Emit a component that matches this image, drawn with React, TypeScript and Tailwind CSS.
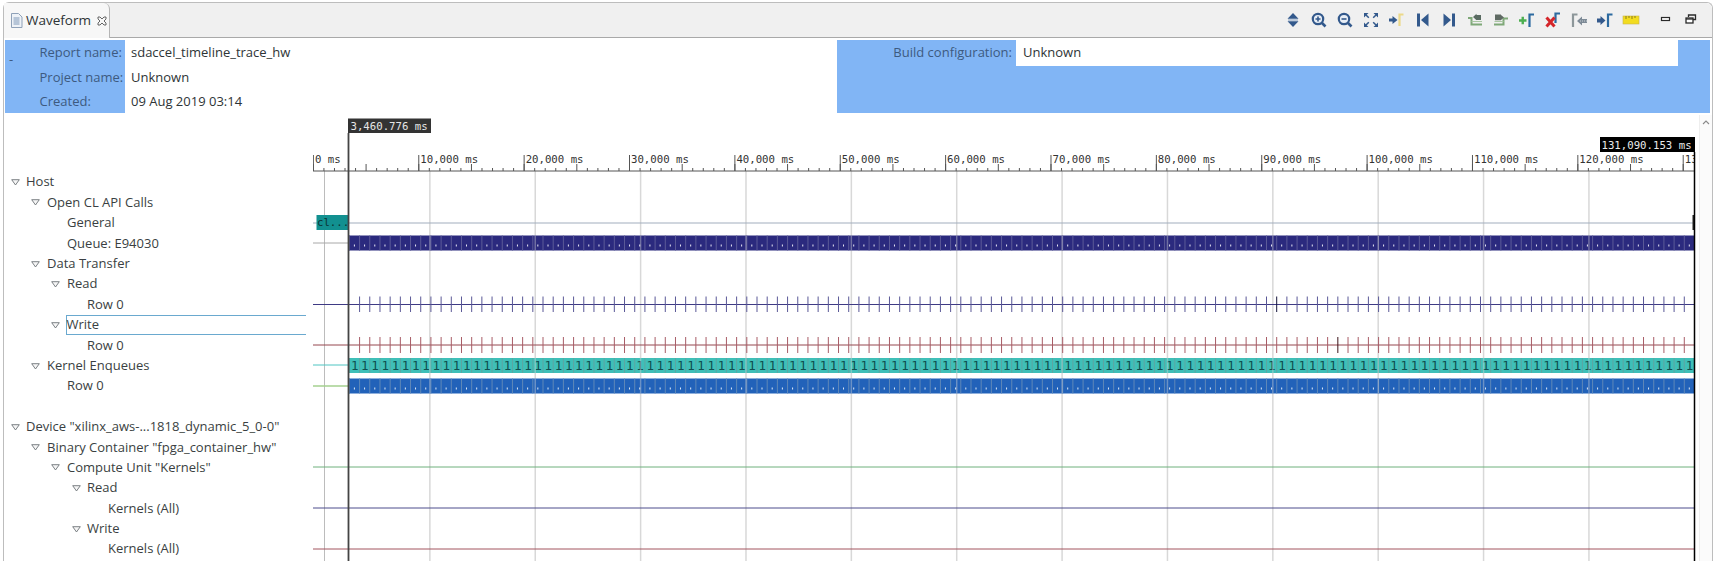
import React from "react";

const NAVY = "#33598c";

type TreeRow = { label: string; level: number; open?: boolean; selected?: boolean };

const treeRows: TreeRow[] = [
  { label: "Host", level: 0, open: true },
  { label: "Open CL API Calls", level: 1, open: true },
  { label: "General", level: 2 },
  { label: "Queue: E94030", level: 2 },
  { label: "Data Transfer", level: 1, open: true },
  { label: "Read", level: 2, open: true },
  { label: "Row 0", level: 3 },
  { label: "Write", level: 2, open: true, selected: true },
  { label: "Row 0", level: 3 },
  { label: "Kernel Enqueues", level: 1, open: true },
  { label: "Row 0", level: 2 },
  { label: "", level: 0 },
  { label: 'Device "xilinx_aws-...1818_dynamic_5_0-0"', level: 0, open: true },
  { label: 'Binary Container "fpga_container_hw"', level: 1, open: true },
  { label: 'Compute Unit "Kernels"', level: 2, open: true },
  { label: "Read", level: 3, open: true },
  { label: "Kernels (All)", level: 4 },
  { label: "Write", level: 3, open: true },
  { label: "Kernels (All)", level: 4 },
];

const indent = ["pl-[26px]", "pl-[47px]", "pl-[67px]", "pl-[87px]", "pl-[108px]"];
const arrowLeft = ["left-[11px]", "left-[31px]", "left-[51px]", "left-[72px]", "left-[92px]"];

function Icon({ children, w = 26 }: { children: React.ReactNode; w?: number }) {
  return (
    <svg width={w} height={18} viewBox={`0 0 ${w} 18`} className="shrink-0">
      <g transform={`translate(${(w - 16) / 2} 1)`}>{children}</g>
    </svg>
  );
}

function ToolbarIcons() {
  return (
    <div className="ml-auto mr-[15px] flex items-center">
      {/* expand / collapse */}
      <Icon>
        <path d="M8 1 13.500 6.800H2.500Z M8 15 2.500 9.200H13.500Z" fill={NAVY} />
        <path d="M3 8h10" stroke="#8aa4c6" />
      </Icon>
      {/* zoom in */}
      <Icon>
        <circle cx="7" cy="7" r="5.2" fill="#e8eef6" stroke={NAVY} strokeWidth="2.200" />
        <path d="M4.500 7h5M7 4.500v5" stroke={NAVY} strokeWidth="1.600" />
        <path d="M11 11l3.500 3.500" stroke={NAVY} strokeWidth="2.600" />
      </Icon>
      {/* zoom out */}
      <Icon>
        <circle cx="7" cy="7" r="5.2" fill="#e8eef6" stroke={NAVY} strokeWidth="2.200" />
        <path d="M4.500 7h5" stroke={NAVY} strokeWidth="1.600" />
        <path d="M11 11l3.500 3.500" stroke={NAVY} strokeWidth="2.600" />
      </Icon>
      {/* fit */}
      <Icon>
        <path d="M1 1h4.500L1 5.500Z M15 1h-4.500L15 5.500Z M1 15h4.500L1 10.500Z M15 15h-4.500L15 10.500Z" fill={NAVY} />
        <path d="M3 3l2.800 2.800M13 3l-2.800 2.800M3 13l2.800-2.800M13 13l-2.800-2.800" stroke={NAVY} strokeWidth="1.500" />
      </Icon>
      {/* go to cursor */}
      <Icon>
        <path d="M0 6.500h3.500V4L8.500 8l-5 4V9.500H0Z" fill={NAVY} />
        <path d="M10.500 14V2.500h4" fill="none" stroke="#ecd98a" strokeWidth="2.200" />
      </Icon>
      {/* first */}
      <Icon>
        <path d="M3.500 1.500v13" stroke={NAVY} strokeWidth="3" />
        <path d="M13.500 1.500 6 8l7.500 6.500Z" fill={NAVY} />
      </Icon>
      {/* last */}
      <Icon>
        <path d="M12.500 1.500v13" stroke={NAVY} strokeWidth="3" />
        <path d="M2.500 1.500 10 8l-7.500 6.500Z" fill={NAVY} />
      </Icon>
      {/* previous transition */}
      <Icon>
        <path d="M1 6h3.500V12.500H15" fill="none" stroke="#7fa878" strokeWidth="2" />
        <path d="M4.500 9.500H15" stroke="#a9c6a2" strokeWidth="1" />
        <path d="M6 5l3.500-3.200V3H14V8H9.500v.2Z" fill="#5a6b62" />
      </Icon>
      {/* next transition */}
      <Icon>
        <path d="M1 12.500h9.500V6.500H15" fill="none" stroke="#7fa878" strokeWidth="2" />
        <path d="M1.500 9.500h9" stroke="#a9c6a2" strokeWidth="1" />
        <path d="M2 2.500h6v.5l3 2.500L8 8v.2H2Z" fill="#5f6a63" />
      </Icon>
      {/* add marker */}
      <Icon>
        <path d="M0 8.500h7.500M3.750 4.750v7.500" stroke="#4caf50" strokeWidth="2.400" />
        <path d="M10.500 15V2.500h4.500" fill="none" stroke="#2c6aa0" strokeWidth="2.200" />
      </Icon>
      {/* delete marker */}
      <Icon>
        <path d="M10.500 11V1.500h4.500" fill="none" stroke="#2c6aa0" strokeWidth="2.200" />
        <path d="M1.500 5.500l8 9M9.500 5.500l-8 9" stroke="#d4252a" strokeWidth="3" />
      </Icon>
      {/* previous marker */}
      <Icon>
        <path d="M2 15V2.500h4.500" fill="none" stroke="#8d979a" strokeWidth="2.200" />
        <path d="M16 7H11V4.500L6 9l5 4.500V11h5Z" fill="#7d8a96" />
        <path d="M9 9h7" stroke="#c9d0d6" strokeDasharray="1 1" />
      </Icon>
      {/* next marker */}
      <Icon>
        <path d="M0 6.500h3.500V4L8.500 8.500l-5 4.500V10.500H0Z" fill={NAVY} />
        <path d="M11 15V2.500h4.500" fill="none" stroke="#2c6aa0" strokeWidth="2.200" />
      </Icon>
      {/* ruler */}
      <Icon>
        <rect x="0" y="4" width="16" height="8" fill="#f2dc1f" stroke="#c9b64d" strokeWidth="0.600" />
        <path d="M3 4v3M6 4v2M9 4v3M12 4v2" stroke="#8b7d1a" />
      </Icon>
      {/* minimize */}
      <div className="w-[17px]" />
      <svg width="14" height="10" viewBox="0 0 14 10" className="shrink-0 -ml-[2px]">
        <rect x="2.500" y="2.500" width="8" height="3" fill="#fff" stroke="#2a2a2a" strokeWidth="1.200" />
      </svg>
      {/* restore */}
      <svg width="12" height="12" viewBox="0 0 12 12" className="ml-[12px] shrink-0">
        <path d="M3.500 3V1h7v4.500H8" fill="none" stroke="#2a2a2a" strokeWidth="1.300" />
        <rect x="1" y="4" width="7" height="5" fill="#fff" stroke="#2a2a2a" strokeWidth="1.300" />
        <path d="M1 5h7" stroke="#2a2a2a" strokeWidth="1.300" />
      </svg>
    </div>
  );
}

function WaveChart() {
  const W = 105.37;
  const majors = Array.from({ length: 14 }, (_, i) => 313.4 + i * W);
  const minors = Array.from({ length: 131 }, (_, i) => 313.4 + i * (W / 10));
  const grid = Array.from({ length: 13 }, (_, i) => 324.5 + i * W);
  const cells = Array.from({ length: 132 }, (_, i) => 349.4 + i * 10.19);
  const mono = { fontFamily: '"DejaVu Sans Mono", monospace', fontSize: 10.7 };
  const one = { fontFamily: '"DejaVu Sans Mono", monospace', fontSize: 12.5 };

  return (
    <svg width={1386} height={446} viewBox="313 115 1386 446" className="block shrink-0">
      {/* grid */}
      {grid.map((x, i) =>
        x < 1694 ? (
          <line key={i} x1={x} x2={x} y1={171} y2={561} stroke={i === 0 ? "#bcbcbc" : "#d8d8d8"} strokeWidth={i === 0 ? 1 : 1.5} />
        ) : null
      )}

      {/* axis */}
      <line x1={313} x2={1694} y1={171} y2={171} stroke="#555" />
      {majors.map((x, i) => (
        <g key={i}>
          <line x1={x} x2={x} y1={155} y2={171} stroke="#555" />
          <text x={x + 1.5} y={162.5} fill="#333" style={mono}>
            {i === 0 ? "0 ms" : i === 13 ? "13" : `${(i * 10).toString()},000 ms`}
          </text>
        </g>
      ))}
      {minors.map((x, i) => (
        <line key={i} x1={x} x2={x} y1={i % 5 === 0 ? 164 : 168} y2={171} stroke="#555" />
      ))}
      <rect x={1695} y={153} width={4} height={16} fill="#fff" />

      {/* track lines */}
      <line x1={313} x2={1694} y1={223} y2={223} stroke="#a2adbd" strokeWidth={1.2} />
      <line x1={313} x2={349} y1={243} y2={243} stroke="#a8a8a8" />
      <line x1={313} x2={1694} y1={304.5} y2={304.5} stroke="#3e3a84" />
      <line x1={313} x2={1694} y1={345} y2={345} stroke="#95474f" />
      <line x1={313} x2={349} y1={365} y2={365} stroke="#4fc5c2" />
      <line x1={313} x2={349} y1={386} y2={386} stroke="#a5d08f" strokeWidth={1.3} />
      <line x1={313} x2={1694} y1={467} y2={467} stroke="#6fb07d" />
      <line x1={313} x2={1694} y1={508} y2={508} stroke="#4c4c8c" />
      <line x1={313} x2={1694} y1={549} y2={549} stroke="#a2545e" />

      {/* general */}
      <rect x={316.5} y={215} width={32} height={15} fill="#129090" />
      <text x={317} y={226} fill="#0a3434" style={mono}>
        cl...
      </text>
      <rect x={1692.5} y={215} width={2} height={15} fill="#222" />

      {/* queue */}
      <rect x={349} y={235.5} width={1345} height={15} fill="#2b2a7e" />
      {cells.map((x, i) => (
        <g key={i}>
          <line x1={x} x2={x} y1={235.5} y2={250.5} stroke="#5c5b98" />
          <rect x={x + 4.5} y={244.5} width={1} height={2} fill="#e8e8f4" />
        </g>
      ))}

      {/* read / write transactions */}
      {cells.slice(1).map((x, i) => (
        <g key={i}>
          <line x1={x} x2={x} y1={296.5} y2={312} stroke={i === 90 ? "#14143c" : "#5a5897"} />
          <line x1={x} x2={x} y1={337} y2={353} stroke={i === 96 ? "#3c1218" : "#a85c66"} />
        </g>
      ))}

      {/* kernel enqueues */}
      <rect x={349} y={358} width={1345} height={15} fill="#3fbfb8" />
      {cells.map((x, i) => (
        <g key={i}>
          <line x1={x} x2={x} y1={358} y2={373} stroke="#5da6a2" />
          <text x={x + 1.5} y={369.5} fill="#0f4f4f" style={one}>
            1
          </text>
        </g>
      ))}

      {/* row 0 */}
      <rect x={349} y={378.5} width={1345} height={15} fill="#2262b9" />
      {cells.map((x, i) => (
        <g key={i}>
          <line x1={x} x2={x} y1={378.5} y2={393.5} stroke="#5f88b8" />
          <rect x={x + 4.5} y={387.5} width={1} height={2} fill="#dfeaf8" />
        </g>
      ))}

      {/* grid shows faintly over bars */}
      {grid.slice(1).map((x, i) =>
        x < 1694 ? (
          <g key={i} opacity={0.4}>
            <line x1={x} x2={x} y1={235.5} y2={250.5} stroke="#d8d8d8" strokeWidth={1.5} />
            <line x1={x} x2={x} y1={358} y2={373} stroke="#d8d8d8" strokeWidth={1.5} />
            <line x1={x} x2={x} y1={378.5} y2={393.5} stroke="#d8d8d8" strokeWidth={1.5} />
          </g>
        ) : null
      )}

      {/* cursors */}
      <line x1={348.5} x2={348.5} y1={133} y2={561} stroke="#444" strokeWidth={1.8} />
      <line x1={1694.5} x2={1694.5} y1={152} y2={561} stroke="#000" strokeWidth={1.5} />
      <rect x={348} y={118.5} width={83} height={14.5} fill="#333" />
      <text x={350.5} y={130} fill="#e6e6e6" style={mono}>
        3,460.776 ms
      </text>
      <rect x={1600} y={137} width={95} height={15} fill="#000" />
      <text x={1601.5} y={148.5} fill="#eaeaea" style={mono}>
        131,090.153 ms
      </text>
    </svg>
  );
}

export default function App() {
  return (
    <div className="relative h-[561px] w-[1716px] overflow-hidden bg-white text-[13px] text-[#2e3436] [font-family:'Open_Sans',sans-serif]">
      <div className="mx-[3px] mt-[2px] flex h-[559px] flex-col rounded-t-[6px] border-x border-t border-[#bdbdbd]">
        {/* tab bar */}
        <div className="flex h-[35px] shrink-0 items-stretch rounded-t-[6px] border-b border-[#a9a9a9] bg-[#f0f0f0]">
          <div className="-mb-px flex w-[106px] items-center rounded-tr-[6px] border-r border-[#b5b5b5] bg-[#f7f7f7] pl-[6px]">
            <svg width="13" height="15" viewBox="0 0 13 15" className="shrink-0">
              <path d="M1.500.5h7l3.500 3.500v10.500h-10.500Z" fill="#eef2f7" stroke="#8fa1b8" />
              <path d="M3.500 5h6M3.500 7h6M3.500 9h6M3.500 11h6" stroke="#7f98b8" />
            </svg>
            <span className="ml-[3px] text-[13.5px] text-[#2e3436]">Waveform</span>
            <svg width="10" height="10" viewBox="0 0 10 10" className="ml-[6px] shrink-0">
              <path d="M1 1h2l2 2 2-2h2v2L7 5l2 2v2H7L5 7 3 9H1V7l2-2-2-2Z" fill="none" stroke="#555" strokeWidth="0.900" />
            </svg>
          </div>
          <ToolbarIcons />
        </div>

        {/* report header */}
        <div className="mt-[2px] flex h-[73px] shrink-0 pl-px pr-px">
          <div className="relative flex w-[120px] shrink-0 flex-col bg-[#81b5f5] pl-[34.5px] text-[#3d5a80]">
            <span className="absolute left-[4px] top-[10px] text-[#3d5a80]">-</span>
            <div className="flex h-[25px] items-center">Report name:</div>
            <div className="flex h-[25px] items-center">Project name:</div>
            <div className="flex h-[23px] items-center">Created:</div>
          </div>
          <div className="flex w-[712px] shrink-0 flex-col pl-[6px]">
            <div className="flex h-[25px] items-center">sdaccel_timeline_trace_hw</div>
            <div className="flex h-[25px] items-center">Unknown</div>
            <div className="flex h-[23px] items-center">09 Aug 2019 03:14</div>
          </div>
          <div className="mr-[1px] flex flex-1 items-start bg-[#81b5f5]">
            <div className="flex h-[26px] w-[179px] shrink-0 items-center justify-end pr-[4px] text-[#3d5a80]">Build configuration:</div>
            <div className="flex h-[26px] w-[662px] shrink-0 items-center bg-white pl-[7px]">Unknown</div>
          </div>
        </div>

        {/* tree + waveform */}
        <div className="mt-[2px] flex min-h-0 flex-1 -ml-[4px]">
          <div className="relative w-[313px] shrink-0 pt-[57px] text-[#3a3f42]">
            {treeRows.map((row, i) => (
              <div key={i} className={`relative flex h-[20.4px] items-center whitespace-nowrap ${indent[row.level]}`}>
                {row.open ? (
                  <svg width="9" height="7" viewBox="0 0 9 7" className={`absolute top-[7px] ${arrowLeft[row.level]}`}>
                    <path d="M.7.7h7.600L4.500 6Z" fill="#f5f5f5" stroke="#6e7478" strokeWidth="0.900" />
                  </svg>
                ) : null}
                {row.selected ? (
                  <div className="absolute inset-y-0 left-[66px] right-[7px] border-y border-l border-y-[#6aa9cf] border-l-[#6aa9cf]" />
                ) : null}
                <span className={row.selected ? "relative -ml-[0.5px]" : ""}>{row.label}</span>
              </div>
            ))}
          </div>
          <WaveChart />
          {/* scrollbar */}
          <div className="flex w-[13px] shrink-0 justify-center border-l border-[#eeeeee] bg-[#fbfbfb] pt-[5px]">
            <svg width="8" height="5" viewBox="0 0 8 5">
              <path d="M1 4l3-3 3 3" fill="none" stroke="#8a8a8a" strokeWidth="1.100" />
            </svg>
          </div>
        </div>
      </div>
    </div>
  );
}
